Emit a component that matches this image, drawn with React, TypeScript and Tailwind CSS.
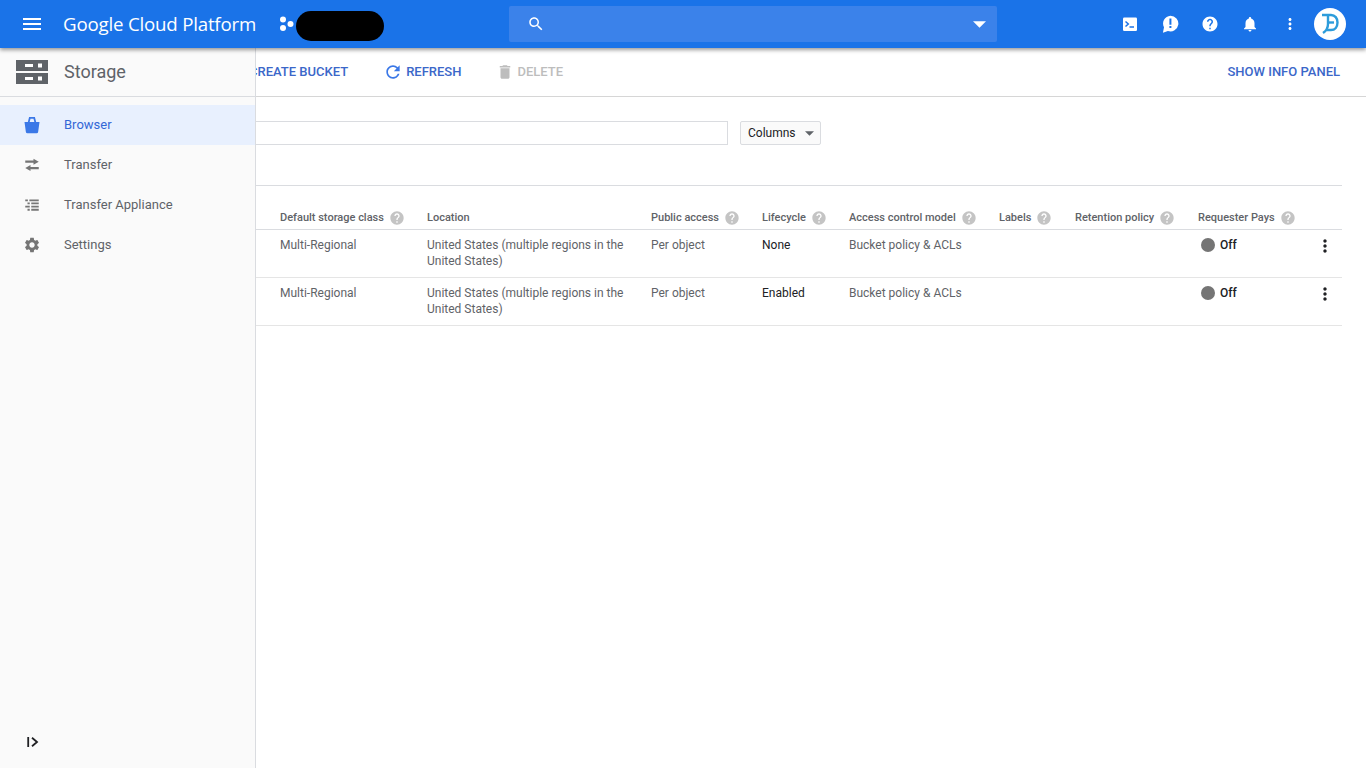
import React from "react";

const P = {
  menu: "M3 18h18v-2H3v2zm0-5h18v-2H3v2zm0-7v2h18V6H3z",
  refresh: "M17.65 6.35C16.2 4.9 14.21 4 12 4c-4.42 0-7.99 3.58-7.99 8s3.57 8 7.99 8c3.73 0 6.84-2.55 7.73-6h-2.08c-.82 2.33-3.04 4-5.65 4-3.31 0-6-2.69-6-6s2.69-6 6-6c1.66 0 3.14.69 4.22 1.78L13 11h7V4l-2.35 2.35z",
  del: "M6 19c0 1.1.9 2 2 2h8c1.1 0 2-.9 2-2V7H6v12zM19 4h-3.5l-1-1h-5l-1 1H5v2h14V4z",
  search: "M15.5 14h-.79l-.28-.27C15.41 12.59 16 11.11 16 9.5 16 5.91 13.09 3 9.5 3S3 5.91 3 9.5 5.91 16 9.5 16c1.61 0 3.09-.59 4.23-1.57l.27.28v.79l5 4.99L20.49 19l-4.99-5zm-6 0C7.01 14 5 11.99 5 9.5S7.01 5 9.5 5 14 7.01 14 9.5 11.99 14 9.5 14z",
  help: "M12 2C6.48 2 2 6.48 2 12s4.48 10 10 10 10-4.48 10-10S17.52 2 12 2zm1 17h-2v-2h2v2zm2.07-7.75l-.9.92C13.45 12.9 13 13.5 13 15h-2v-.5c0-1.1.45-2.1 1.17-2.83l1.24-1.26c.37-.36.59-.86.59-1.41 0-1.1-.9-2-2-2s-2 .9-2 2H8c0-2.21 1.79-4 4-4s4 1.79 4 4c0 .88-.36 1.68-.93 2.25z",
  bell: "M12 22c1.1 0 2-.9 2-2h-4c0 1.1.89 2 2 2zm6-6v-5c0-3.07-1.64-5.64-4.5-6.32V4c0-.83-.67-1.5-1.5-1.5s-1.5.67-1.5 1.5v.68C7.63 5.36 6 7.92 6 11v5l-2 2v1h16v-1l-2-2z",
  more: "M12 8c1.1 0 2-.9 2-2s-.9-2-2-2-2 .9-2 2 .9 2 2 2zm0 2c-1.1 0-2 .9-2 2s.9 2 2 2 2-.9 2-2-.9-2-2-2zm0 6c-1.1 0-2 .9-2 2s.9 2 2 2 2-.9 2-2-.9-2-2-2z",
  gear: "M19.14 12.94c.04-.3.06-.61.06-.94 0-.32-.02-.64-.07-.94l2.03-1.58c.18-.14.23-.41.12-.61l-1.92-3.32c-.12-.22-.37-.29-.59-.22l-2.39.96c-.5-.38-1.03-.7-1.62-.94l-.36-2.54c-.04-.24-.24-.41-.48-.41h-3.84c-.24 0-.43.17-.47.41l-.36 2.54c-.59.24-1.13.57-1.62.94l-2.39-.96c-.22-.08-.47 0-.59.22L2.74 8.87c-.12.21-.08.47.12.61l2.03 1.58c-.05.3-.09.63-.09.94s.02.64.07.94l-2.03 1.58c-.18.14-.23.41-.12.61l1.92 3.32c.12.22.37.29.59.22l2.39-.96c.5.38 1.03.7 1.62.94l.36 2.54c.05.24.24.41.48.41h3.84c.24 0 .44-.17.47-.41l.36-2.54c.59-.24 1.13-.56 1.62-.94l2.39.96c.22.08.47 0 .59-.22l1.92-3.32c.12-.22.07-.47-.12-.61l-2.01-1.58zM12 15.6c-1.98 0-3.6-1.62-3.6-3.6s1.62-3.6 3.6-3.6 3.6 1.62 3.6 3.6-1.62 3.6-3.6 3.6z",
  swap: "M3 6h11V3.5l7 4-7 4V9H3zM21 14.5H10V12l-7 4 7 4v-2.5h11z",
  feedback: "M12.5 2a9.5 9.5 0 1 1-3 18.5L3.5 22.5l1.3-6.5A9.5 9.5 0 0 1 12.5 2zM13.7 5.5h-2.4v7.5h2.4zM13.7 14.5h-2.4v2.4h2.4z",
  basket: "M3 8.5h18l-1.6 11.7a2 2 0 0 1-2 1.8H6.6a2 2 0 0 1-2-1.8zM7 8.5l1.5-6h7l1.5 6h-2.2l-1-4h-3.6l-1 4z",
  appliance: "M3 4.5h3.5v2.4H3zM8.5 4.5H21v2.4H8.5zM6 8.7h3v2.4H6zM11 8.7h10v2.4H11zM3 12.9h6v2.4H3zM11 12.9h10v2.4H11zM6 17.1h3v2.4H6zM11 17.1h10v2.4H11z",
};

function Icon({ d, className }: { d: string; className: string }) {
  return (
    <svg viewBox="0 0 24 24" className={className} fill="currentColor" fillRule="evenodd">
      <path d={d} />
    </svg>
  );
}

const Help = () => <Icon d={P.help} className="h-4 w-4 shrink-0 text-[#c4c4c4]" />;

const grid = "grid grid-cols-[24px_147px_224px_111px_87px_150px_76px_123px_124px_11px_1fr]";

function Head({ label, help = true }: { label: string; help?: boolean }) {
  return (
    <div className="flex items-center gap-[5px] whitespace-nowrap text-[11px] font-medium text-[#5f6368]">
      {label}
      {help && <Help />}
    </div>
  );
}

function Row({ lifecycle }: { lifecycle: string }) {
  return (
    <div className={`${grid} h-[48px] items-start border-b border-[#e5e5e5] pt-[7px] text-[12px] leading-[16px] text-[#5f6368]`}>
      <div />
      <div>Multi-Regional</div>
      <div className="w-[205px]">United States (multiple regions in the United States)</div>
      <div>Per object</div>
      <div className="text-[#202124]">{lifecycle}</div>
      <div>Bucket policy &amp; ACLs</div>
      <div />
      <div />
      <div className="flex items-center gap-[5px] pl-[3px] text-[#202124]">
        <span className="h-[14px] w-[14px] rounded-full bg-[#757575]" />
        <span className="font-medium">Off</span>
      </div>
      <div className="-ml-[1px]">
        <Icon d={P.more} className="-ml-[6px] mt-[-1px] h-[20px] w-[20px] text-[#202124]" />
      </div>
    </div>
  );
}

function NavItem({ icon, label, active }: { icon: React.ReactNode; label: string; active?: boolean }) {
  return (
    <div className={`flex h-10 items-center text-[13px] ${active ? "bg-[#e8f0fe] text-[#3367d6]" : "text-[#5f6368]"}`}>
      <div className="flex w-16 justify-center">{icon}</div>
      {label}
    </div>
  );
}

export default function App() {
  return (
    <div className="flex h-[768px] w-[1366px] flex-col overflow-hidden bg-white font-['Roboto',sans-serif]">
      <header className="relative z-10 flex h-12 shrink-0 items-center bg-[#1a73e8] text-white shadow-[0_2px_4px_rgba(0,0,0,0.4)]">
        <div className="flex w-[63px] shrink-0 justify-center">
          <Icon d={P.menu} className="h-6 w-6" />
        </div>
        <span className="w-[216px] shrink-0 font-['Open_Sans',sans-serif] text-[18.7px] tracking-[-0.2px]">Google Cloud Platform</span>
        <svg viewBox="0 0 16 16" className="h-4 w-4 shrink-0" fill="currentColor">
          <circle cx="4" cy="3.5" r="3" />
          <circle cx="4" cy="12" r="3" />
          <circle cx="11.5" cy="8" r="3" />
        </svg>
        <div className="ml-px mt-1 h-[30px] w-[88px] shrink-0 rounded-[15px] bg-black" />
        <div className="ml-[125px] flex h-9 w-[488px] shrink-0 items-center justify-between rounded-[2px] bg-[#3b82ea] pl-[18px] pr-[11px]">
          <Icon d={P.search} className="h-[18px] w-[18px]" />
          <svg viewBox="0 0 12 6" className="h-[7px] w-[13px]" fill="currentColor">
            <path d="M0 0h12L6 6z" />
          </svg>
        </div>
        <div className="ml-[124px] flex items-center gap-[22px]">
          <svg viewBox="0 0 18 18" className="h-[18px] w-[18px]">
            <rect x="2" y="2.5" width="14" height="13.5" rx="1.2" fill="#fff" />
            <path d="M4.5 6.5l2.8 2.5-2.8 2.5" fill="none" stroke="#1a73e8" strokeWidth="1.5" />
            <path d="M8.5 12h4.5" fill="none" stroke="#1a73e8" strokeWidth="1.5" />
          </svg>
          <Icon d={P.feedback} className="-mx-px h-5 w-5" />
          <Icon d={P.help} className="h-[18px] w-[18px]" />
          <Icon d={P.bell} className="h-[18px] w-[18px]" />
          <Icon d={P.more} className="h-[18px] w-[18px]" />
        </div>
        <div className="ml-[15px] flex h-8 w-8 items-center justify-center rounded-full bg-white">
          <svg viewBox="0 0 18 22" className="h-[22px] w-[18px]" fill="none" stroke="#2d9cdb" strokeWidth="2.4">
            <path d="M1 2h9c4 0 6.5 3.2 6.5 7.5S14 17 10 17H6" />
            <path d="M7 2v9c0 4-2 7-5 9" />
            <path d="M7 9.5h6" />
          </svg>
        </div>
      </header>

      <div className="flex min-h-0 flex-1">
        <aside className="flex w-[256px] shrink-0 flex-col border-r border-[#dadce0] bg-[#fafafa]">
          <div className="flex h-[49px] shrink-0 items-center border-b border-[#dadce0]">
            <svg viewBox="0 0 32 24" className="ml-4 h-6 w-8">
              <rect y="0" width="32" height="11" fill="#5f6368" />
              <rect y="13" width="32" height="11" fill="#5f6368" />
              <rect x="9" y="4" width="8" height="3" fill="#fff" />
              <rect x="22" y="3.5" width="4" height="4" fill="#fff" />
              <rect x="9" y="17" width="8" height="3" fill="#fff" />
              <rect x="22" y="16.5" width="4" height="4" fill="#fff" />
            </svg>
            <span className="mb-[2px] ml-4 text-[18px] text-[#5f6368]">Storage</span>
          </div>
          <nav className="mt-2 flex flex-col">
            <NavItem active label="Browser" icon={<Icon d={P.basket} className="h-5 w-5 text-[#3b78e7]" />} />
            <NavItem label="Transfer" icon={<Icon d={P.swap} className="h-[18px] w-[18px] text-[#757575]" />} />
            <NavItem label="Transfer Appliance" icon={<Icon d={P.appliance} className="h-[18px] w-[18px] text-[#757575]" />} />
            <NavItem label="Settings" icon={<Icon d={P.gear} className="h-[18px] w-[18px] text-[#757575]" />} />
          </nav>
          <div className="mt-auto flex h-[52px] items-center pl-[27px] text-[#202124]">
            <svg viewBox="0 0 12 10" className="h-[10px] w-[12px]" fill="none" stroke="currentColor" strokeWidth="1.8">
              <path d="M1.2 0v10" />
              <path d="M5 .8L10 5 5 9.2" />
            </svg>
          </div>
        </aside>

        <main className="min-w-0 flex-1 overflow-hidden">
          <div className="flex h-[49px] items-center border-b border-[#d6d6d6] pr-[26px] text-[13px] font-medium text-[#3b67c9]">
            <span className="-ml-[7px] whitespace-nowrap">CREATE BUCKET</span>
            <Icon d={P.refresh} className="ml-[35px] h-[20px] w-[20px] text-[#3b78e7]" />
            <span className="ml-[3px]">REFRESH</span>
            <Icon d={P.del} className="ml-[35px] h-[18px] w-[18px] text-[#bdbdbd]" />
            <span className="ml-[3px] text-[#bdbdbd]">DELETE</span>
            <span className="ml-auto">SHOW INFO PANEL</span>
          </div>

          <div className="pr-6">
            <div className="flex h-[89px] items-start border-b border-[#dadce0] pt-6">
              <div className="h-6 w-[472px] border border-l-0 border-[#dadce0]" />
              <div className="ml-3 flex h-6 w-[81px] items-center gap-[9px] rounded-[2px] border border-[#dadce0] bg-[#fafafa] pl-[7px] text-[12px] text-[#202124]">
                Columns
                <svg viewBox="0 0 10 5" className="h-[5px] w-[9px] text-[#5f6368]" fill="currentColor">
                  <path d="M0 0h10L5 5z" />
                </svg>
              </div>
            </div>
            <div className={`${grid} mt-5 h-[24px] items-center border-b border-[#dadce0] pt-[1px]`}>
              <div />
              <Head label="Default storage class" />
              <Head label="Location" help={false} />
              <Head label="Public access" />
              <Head label="Lifecycle" />
              <Head label="Access control model" />
              <Head label="Labels" />
              <Head label="Retention policy" />
              <Head label="Requester Pays" />
              <div />
            </div>
            <Row lifecycle="None" />
            <Row lifecycle="Enabled" />
          </div>
        </main>
      </div>
    </div>
  );
}
